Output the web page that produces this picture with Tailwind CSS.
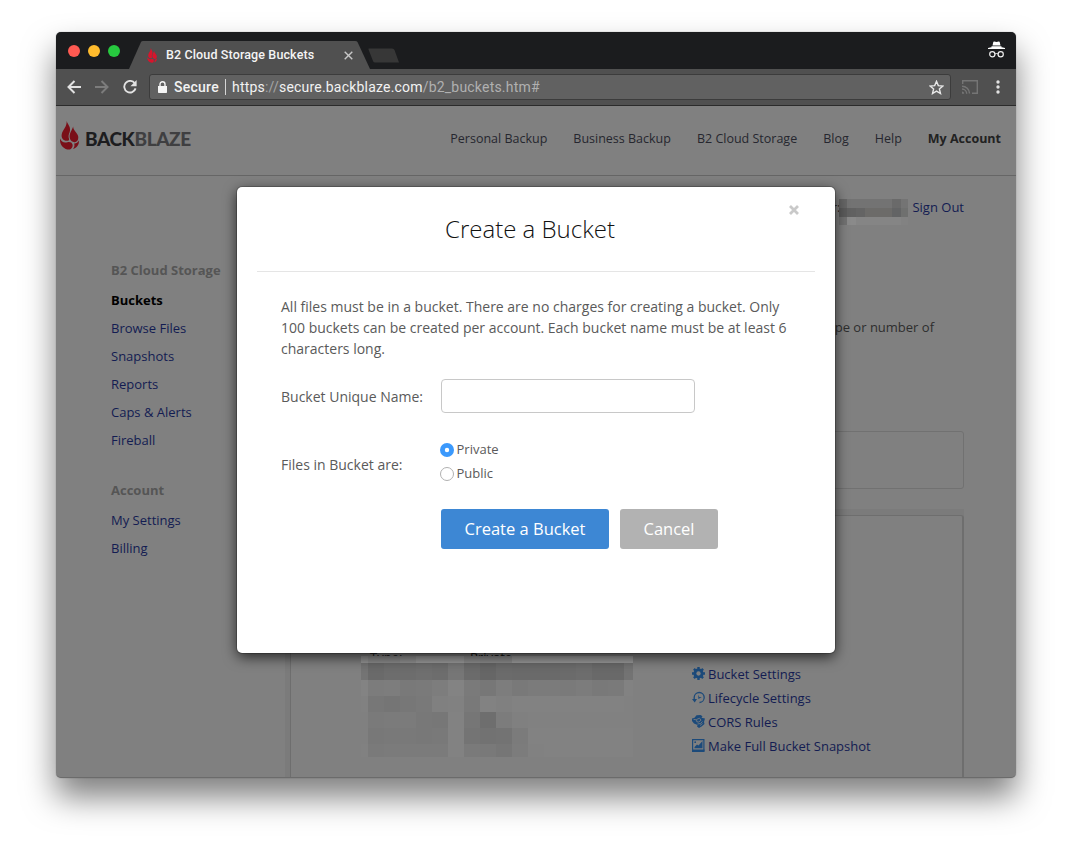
<!DOCTYPE html>
<html lang="en">
<head>
<meta charset="utf-8">
<title>B2 Cloud Storage Buckets</title>
<script src="https://cdn.jsdelivr.net/npm/@tailwindcss/browser@4"></script>
</head>
<body class="bg-white w-[1072px] h-[858px] overflow-hidden font-['Open_Sans',sans-serif]">
<svg class="hidden"><defs>
  <g id="flame">
    <path d="M6.700 0C7.500 3.500 10.500 5 10 9.500C9.700 12 8.300 13.500 8.600 16C8.800 18 10 19 8 19.700C4 20.500 1 17.500 1.700 13.500C2.500 9 7 6 6.700 0Z"/>
    <path d="M13.200 5.500C12.900 9.500 18 12 18.300 16C18.500 19.500 16.500 21.500 14.300 21.200C10.500 20.700 9 17 9.800 13.500C10.500 10.800 12 9 13.200 5.500Z"/>
    <path d="M0 17.500C1.500 21 4 22.300 7.500 21.200C10 20.700 12 21.500 12.500 23.500C13 25.500 12 27.500 10 28.500C4 29 -.5 24 0 17.500Z"/>
    <path d="M18.800 19.500C19.300 23 17.500 26.500 13 28C14.500 26 14.700 24.500 14.200 22.500C16.300 22.600 17.800 21.500 18.800 19.500Z"/>
  </g>
</defs></svg>
<div class="pt-8 pl-14">
<div class="relative w-[960px] h-[746px] rounded-[5px] shadow-[0_0_1px_rgba(0,0,0,0.5),0_19px_32px_rgba(0,0,0,0.5)]">
<div class="w-full h-full rounded-[5px] overflow-hidden flex flex-col bg-[#808080]">

  <!-- tab strip -->
  <div class="h-[37px] shrink-0 bg-[#1b1c1e] flex font-[Roboto,sans-serif]">
    <div class="flex gap-2 pl-3 pt-[13px] w-[73px] shrink-0">
      <span class="size-3 rounded-full bg-[#ff5a52]"></span>
      <span class="size-3 rounded-full bg-[#ffbb2d]"></span>
      <span class="size-3 rounded-full bg-[#27c93f]"></span>
    </div>
    <div class="relative w-[240px] h-[37px] shrink-0">
      <svg class="absolute inset-0" width="242" height="37" viewBox="0 0 242 37"><path d="M0 37 L12 10 Q12.500 9 14 9 L226 9 Q228 9 228.500 10 L241 37Z" fill="#505050"/></svg>
      <div class="relative flex items-center h-7 mt-[9px] pl-[18px]">
        <svg width="11" height="15" viewBox="0 0 20 29" class="shrink-0"><use href="#flame" fill="#d8142c"/></svg>
        <span class="ml-2 w-[184px] text-[12.5px] font-medium text-[#f4f4f4] whitespace-nowrap tracking-[0.13px]">B2 Cloud Storage Buckets</span>
      </div>
      <svg class="absolute left-[215px] top-[19px]" width="9" height="9" viewBox="0 0 9 9"><path d="M.7.700 8.300 8.300M8.300.700.700 8.300" stroke="#c8c8c8" stroke-width="1.400"/></svg>
    </div>
    <svg class="mt-4 -ml-px" width="32" height="15" viewBox="0 0 32 15"><path d="M1 0.500H24Q26 .5 26.500 2L31 14.500H7Q5.500 14.500 5 13L.5 1.500Q0 .5 1 .5Z" fill="#373737"/></svg>
    <svg class="ml-auto mr-[11px] mt-[9px]" width="17" height="18" viewBox="0 0 17 18"><path d="M4.500 4.500 5.300 1q.2-.7 1-.5l2.200.6 2.200-.6q.8-.2 1 .5l.8 3.500zM3.500 5.200h10v.8h-10zM0 7q4-1.200 8.500-1.200T17 7v1H0z" fill="#fff"/><circle cx="4.300" cy="13.300" r="2.600" fill="none" stroke="#eee" stroke-width="1.200"/><circle cx="12.700" cy="13.300" r="2.600" fill="none" stroke="#eee" stroke-width="1.200"/><path d="M6.900 13q1.600-1 3.200 0" fill="none" stroke="#eee"/></svg>
  </div>

  <!-- toolbar -->
  <div class="h-[37px] shrink-0 bg-[#505050] border-b border-[#2b2b2b] flex items-center font-[Roboto,sans-serif]">
    <svg class="ml-[11px]" width="14" height="14" viewBox="0 0 14 14"><path d="M14 7H1.500M7.500 1 1.500 7l6 6" fill="none" stroke="#e2e2e2" stroke-width="2"/></svg>
    <svg class="ml-[14px]" width="14" height="14" viewBox="0 0 14 14"><path d="M0 7h12.500M6.500 1l6 6-6 6" fill="none" stroke="#7c7c7c" stroke-width="2"/></svg>
    <svg class="ml-[14px]" width="14" height="14" viewBox="0 0 15 15"><path d="M12.600 3.500A6.200 6.200 0 1 0 13.500 9" fill="none" stroke="#e2e2e2" stroke-width="2"/><path d="M14.600 0v6.600H8z" fill="#e2e2e2"/></svg>
    <div class="ml-[12px] w-[802px] h-[26px] rounded-[3px] border border-[#3c3c3c] bg-[#616161] flex items-center text-[14px] text-[#f2f2f2] whitespace-nowrap">
      <svg class="ml-[8px]" width="9" height="12" viewBox="0 0 9 12"><path d="M0 5h9v6.300q0 .7-.7.7H.7q-.7 0-.7-.7z" fill="#f4f4f4"/><path d="M2 5V3.200a2.500 2.500 0 0 1 5 0V5" fill="none" stroke="#f4f4f4" stroke-width="1.400"/></svg>
      <span class="ml-[7px] w-[45px] font-medium tracking-[0.25px]">Secure</span>
      <span class="ml-[6px] w-px h-4 bg-[#d5d5d5]"></span>
      <span class="ml-[6px] tracking-[0.2px]"><span>https</span><span class="text-[#a5a5a5]">://</span><span>secure.backblaze.com</span><span class="text-[#b0b0b0]">/b2_buckets.htm#</span></span>
      <svg class="ml-auto mr-[6px]" width="15" height="15" viewBox="0 0 15 15"><path d="M7.500 1.300 9.300 5.600l4.600.4-3.500 3 1.100 4.500-4-2.400-4 2.400 1.100-4.500L1.100 6l4.600-.4z" fill="none" stroke="#e8e8e8" stroke-width="1.400"/></svg>
    </div>
    <svg class="ml-[11px]" width="16" height="14" viewBox="0 0 16 14"><path d="M.7 4V.8h14.600v12.400H10" fill="none" stroke="#757575" stroke-width="1.400"/><path d="M0 6.200A7.500 7.500 0 0 1 7.500 13.600M0 9a4.800 4.800 0 0 1 4.700 4.700" fill="none" stroke="#757575" stroke-width="1.400"/><path d="M0 11.500a2.200 2.200 0 0 1 2.200 2.200H0z" fill="#757575"/></svg>
    <svg class="ml-[18px]" width="4" height="14" viewBox="0 0 4 14"><circle cx="2" cy="2" r="1.700" fill="#e2e2e2"/><circle cx="2" cy="7" r="1.700" fill="#e2e2e2"/><circle cx="2" cy="12" r="1.700" fill="#e2e2e2"/></svg>
  </div>

  <!-- site header -->
  <header class="h-[70px] shrink-0 border-b border-[#666] flex items-center">
    <svg class="ml-[4px] mb-[10px]" width="19" height="29" viewBox="0 0 19 29"><use href="#flame" fill="#7a0f18"/></svg>
    <div class="ml-[6px] mb-[3px] font-[Lato,sans-serif] font-black text-[19px] whitespace-nowrap text-[#1d1d1f] tracking-[-0.4px]"><span>BACK</span><span class="text-[#3f3f41]">BLAZE</span></div>
    <nav class="ml-auto mr-[15px] mb-[2px] flex gap-[26px] text-[12.5px] text-[#26272f] whitespace-nowrap">
      <a>Personal Backup</a><a>Business Backup</a><a>B2 Cloud Storage</a><a>Blog</a><a>Help</a><a class="font-bold text-[#222]">My Account</a>
    </nav>
  </header>

  <!-- page -->
  <div class="flex-1 flex min-h-0 text-[13px] text-[#131c52]">
    <aside class="w-[229px] shrink-0 pl-[55px] pt-[80px] flex flex-col leading-7 whitespace-nowrap">
      <h3 class="font-bold text-[#555] mb-[2px]">B2 Cloud Storage</h3>
      <a class="font-bold text-black">Buckets</a>
      <a>Browse Files</a><a>Snapshots</a><a>Reports</a><a>Caps &amp; Alerts</a><a>Fireball</a>
      <h3 class="font-bold text-[#555] mt-[22px] mb-[2px]">Account</h3>
      <a>My Settings</a><a>Billing</a>
    </aside>
    <main class="w-[679px] shrink-0 flex flex-col">
      <div class="mt-[21px] h-7 flex justify-end">
        <span class="text-[#2b2b2b] leading-5 -mr-px">r:</span>
        <svg class="relative mt-[2px] shrink-0 mr-[4px]" width="69" height="26" viewBox="0 0 69 26" shape-rendering="crispEdges">
          <path fill="#666" d="M0 0h8v9H0z"/><path fill="#5b5b5b" d="M0 9h8v9H0z"/><path fill="#727272" d="M0 18h8v8H0z"/>
          <path fill="#737373" d="M8 0h45v9H8z"/><path fill="#6a6a6a" d="M53 0h9v9h-9z"/><path fill="#747474" d="M62 0h7v9h-7z"/>
          <path fill="#616161" d="M8 9h9v9H8z"/><path fill="#646464" d="M17 9h9v9h-9z"/><path fill="#6c6b69" d="M26 9h27v9H26z"/><path fill="#636465" d="M53 9h9v9h-9z"/><path fill="#6f706f" d="M62 9h7v9h-7z"/>
          <path fill="#8a8a8a" d="M8 18h9v8H8z"/><path fill="#858585" d="M17 18h45v8H17z"/><path fill="#828282" d="M62 18h7v8h-7z"/>
        </svg>
        <a class="leading-5">Sign Out</a>
      </div>
      <p class="mt-[92px] h-5 leading-5 text-right pr-[30px] text-[#2e2e2e]">type or number of</p>
      <div class="mt-[94px] h-[58px] shrink-0 rounded-[3px] border border-[#717171]"></div>
      <div class="mt-5 flex-1 bg-[#7b7b7b] pl-[5px] pt-[6px] min-h-0">
        <div class="h-full border-t border-l border-r-2 border-[#6e6e6e] rounded-t-[3px] bg-[#808080] pt-[129px] flex items-start">
          <div class="relative ml-[70px] w-[331px] h-[120px] shrink-0">
            <div class="flex text-[#222] leading-5 pl-[9px] pt-[2px]"><span class="w-[100px]">Type:</span><span class="text-[#111]">Private</span></div>
            <svg id="mosaic" class="absolute left-0 top-[11px]" width="272" height="101" viewBox="0 0 272 101" shape-rendering="crispEdges"></svg>
          </div>
          <div class="pt-[17px] flex flex-col leading-6 whitespace-nowrap">
            <a class="flex items-center gap-[3px]"><svg class="-mt-[2px]" width="13" height="13" viewBox="0 0 12 12"><g fill="#1c4a7a"><circle cx="6" cy="6" r="4.700"/><path d="M4.900 0h2.200v12H4.900zM0 4.900h12v2.200H0z"/><path d="M4.900 0h2.200v12H4.900z" transform="rotate(45 6 6)"/><path d="M4.900 0h2.200v12H4.900z" transform="rotate(-45 6 6)"/></g><circle cx="6" cy="6" r="2" fill="#808080"/></svg><span>Bucket Settings</span></a>
            <a class="flex items-center gap-[3px]"><svg class="-mt-[2px]" width="13" height="13" viewBox="0 0 13 13"><path d="M2.200 9V6.300A5 5 0 1 1 7.500 11.500" fill="none" stroke="#1c4a7a" stroke-width="1.300"/><path d="M0 8h5l-2.300 3.500zM6.300 3.700l1 2.300 2.500.3-3.500 1.700z" fill="#1c4a7a"/></svg><span>Lifecycle Settings</span></a>
            <a class="flex items-center gap-[3px]"><svg class="-mt-[2px]" width="13" height="13" viewBox="0 0 13 13"><path d="M0 3.500 2.500 2.700 4.500.200 8.500 0 10.500 1.300 9.500 2.800 13 3.500 12 7 12.500 9 9.500 11.500 7 13 5 11.500 5.500 10 2 8.500 0 6z" fill="#1c4a7a"/><path d="M1.500 4.300l2.500.5M4.800 6.800 4.500 4.500 7.500 3.200 9 5.200 6.800 7zM5.500 9l3-.5 2-2M8 10.500l2.500-2" fill="none" stroke="#808080" stroke-width=".8"/></svg><span>CORS Rules</span></a>
            <a class="flex items-center gap-[3px]"><svg class="-mt-[2px]" width="13" height="13" viewBox="0 0 13 13"><path d="M.6.600h11.300v11H.6z" fill="none" stroke="#1c4a7a" stroke-width="1.200"/><path d="M2.500 9.200V8L5 5.500l1.500 1L10.500 2v7.200zM0 10.500h12.500V13H0z" fill="#1c4a7a"/><circle cx="3.200" cy="3.200" r=".9" fill="#1c4a7a"/></svg><span>Make Full Bucket Snapshot</span></a>
          </div>
        </div>
      </div>
    </main>
  </div>
</div>
<div class="absolute left-0 bottom-0 w-full h-2 rounded-b-[5px] border-b border-[#6b6b6b]"></div>

<!-- dialog -->
<div class="absolute left-[181px] top-[155px] w-[598px] h-[466px] bg-white rounded-[5px] shadow-[0_0_0_1px_rgba(0,0,0,0.2),0_4px_14px_rgba(0,0,0,0.7)] text-[#5a5a5a] text-[14px]">
  <svg class="absolute left-[552px] top-[18px]" width="10" height="10" viewBox="0 0 10 10"><path d="M1 1l8 8M9 1 1 9" stroke="#c9c9c9" stroke-width="2.800"/></svg>
  <h2 class="mx-5 h-[85px] pt-[24px] pr-3 border-b border-[#e5e5e5] text-center text-[24px] leading-[36px] font-light text-[#111]">Create a Bucket</h2>
  <div class="pl-11 pt-[24px]">
    <p class="leading-[21px] whitespace-nowrap"><span>All files must be in a bucket. There are no charges for creating a bucket. Only</span><br>100 buckets can be created per account. Each bucket name must be at least 6<br>characters long.</p>
    <div class="mt-[20px] flex items-center">
      <label class="w-[160px]">Bucket Unique Name:</label>
      <div class="w-[254px] h-[34px] rounded-[4px] border border-[#c8c8c8]"></div>
    </div>
    <div class="mt-[24px] flex items-center">
      <div class="w-[159px] pt-[7px]">Files in Bucket are:</div>
      <div class="text-[13px] leading-6">
        <label class="flex items-center gap-[2.5px]"><svg class="mt-px" width="14" height="14" viewBox="0 0 14 14"><circle cx="7" cy="7" r="7" fill="#3b99fc"/><circle cx="7" cy="7" r="2.200" fill="#fff"/></svg><span>Private</span></label>
        <label class="flex items-center gap-[2.5px]"><svg class="mt-px" width="14" height="14" viewBox="0 0 14 14"><circle cx="7" cy="7" r="6.500" fill="#fff" stroke="#b0b0b0"/></svg><span>Public</span></label>
      </div>
    </div>
    <div class="ml-[160px] mt-[24px] flex gap-[11px] text-white text-[16.5px] leading-10 text-center">
      <button class="w-[168px] h-10 rounded-[3px] bg-[#3d87d4]">Create a Bucket</button>
      <button class="w-[98px] h-10 rounded-[3px] bg-[#b2b2b2]">Cancel</button>
    </div>
  </div>
</div>
</div>
</div>
<script>
// Pixelated block that hides the bucket details: column edges, row edges, grey level per cell.
const xs=[0,7,23,39,55,71,87,103,119,135,151,167,183,199,215,231,247,263,272];
const ys=[0,7,24,40,56,72,88,101];
const rows=[
"96 8d 8d 92 9b 9b 9b 8f 8d 8d 9b 9b 9b 9b 9b 9b 9b 9b",
"74 6a 6d 6d 6f 6d 76 6b 66 6b 6a 6a 6a 6b 6d 69 69 73",
"83 7c 7d 79 7a 7d 83 7a 77 7d 79 7b 7b 7a 7c 79 7a 82",
"81 77 75 77 79 80 81 79 82 80 82 82 82 82 82 82 82 81",
"80 7a 7b 7b 78 77 82 76 6e 7c 80 81 81 81 81 81 81 81",
"80 78 79 79 78 79 82 74 72 73 7b 82 82 82 82 82 82 82",
"81 7a 7b 7b 7b 7b 82 7a 79 76 7c 81 82 82 82 82 82 82"];
document.getElementById('mosaic').innerHTML=rows.map((r,j)=>r.split(' ').map((c,i)=>`<rect x="${xs[i]}" y="${ys[j]}" width="${xs[i+1]-xs[i]}" height="${ys[j+1]-ys[j]}" fill="#${c}${c}${c}"/>`).join('')).join('');
</script>
</body>
</html>
